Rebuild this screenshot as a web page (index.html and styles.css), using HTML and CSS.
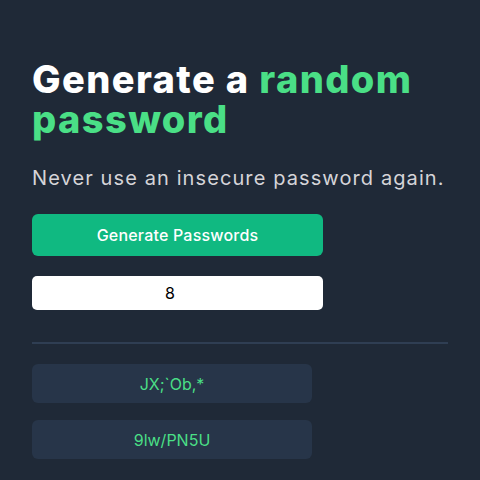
FILE: index.html
```html
<!DOCTYPE html>
<html lang="en">
<head>
<meta charset="utf-8">
<title>Password Generator</title>
<link rel="stylesheet" href="styles.css">
</head>
<body>
<main class="container">
  <h1 class="title">Generate a <span class="accent">random</span> <span class="accent">password</span></h1>
  <p class="subtitle">Never use an insecure password again.</p>
  <button class="generate-btn" type="button">Generate Passwords</button>
  <input class="length-input" type="number" value="8">
  <hr class="divider">
  <div class="passwords">
    <div class="password-box">JX;`Ob,*</div>
    <div class="password-box">9lw/PN5U</div>
  </div>
</main>
</body>
</html>
```
FILE: styles.css
```css
html, body {
  margin: 0;
  padding: 0;
  background: #1f2937;
}
body {
  font-family: Inter, "Noto Sans", sans-serif;
  color: #ffffff;
}
.container {
  padding: 59px 32px 0 32px;
  display: flex;
  flex-direction: column;
  align-items: flex-start;
}
.title {
  margin: 0;
  font-size: 38px;
  line-height: 40px;
  font-weight: 800;
  letter-spacing: 1.4px;
}
.accent {
  color: #4adf86;
}
.subtitle {
  margin: 27px 0 0 0;
  font-size: 20px;
  line-height: 24px;
  letter-spacing: 1.1px;
  color: #d5d4d8;
}
.generate-btn {
  margin-top: 24px;
  width: 291px;
  height: 42px;
  border: none;
  border-radius: 6px;
  background: #10b981;
  color: #ffffff;
  font-family: Inter, sans-serif;
  font-size: 16px;
  font-weight: 500;
  letter-spacing: 0.2px;
}
.length-input {
  margin-top: 20px;
  width: 291px;
  height: 34px;
  box-sizing: border-box;
  border: none;
  border-radius: 5px;
  background: #ffffff;
  text-align: center;
  font-family: Inter, sans-serif;
  font-size: 16px;
  color: #000;
  padding: 0;
}
.divider {
  align-self: stretch;
  margin: 32px 0 0 0;
  border: none;
  height: 2px;
  background: #2f3e53;
}
.passwords {
  margin-top: 20px;
  display: flex;
  flex-direction: column;
  gap: 17px;
}
.password-box {
  width: 280px;
  height: 39px;
  border-radius: 6px;
  background: #273549;
  color: #4adf86;
  font-size: 16px;
  display: flex;
  align-items: center;
  justify-content: center;
}
```
